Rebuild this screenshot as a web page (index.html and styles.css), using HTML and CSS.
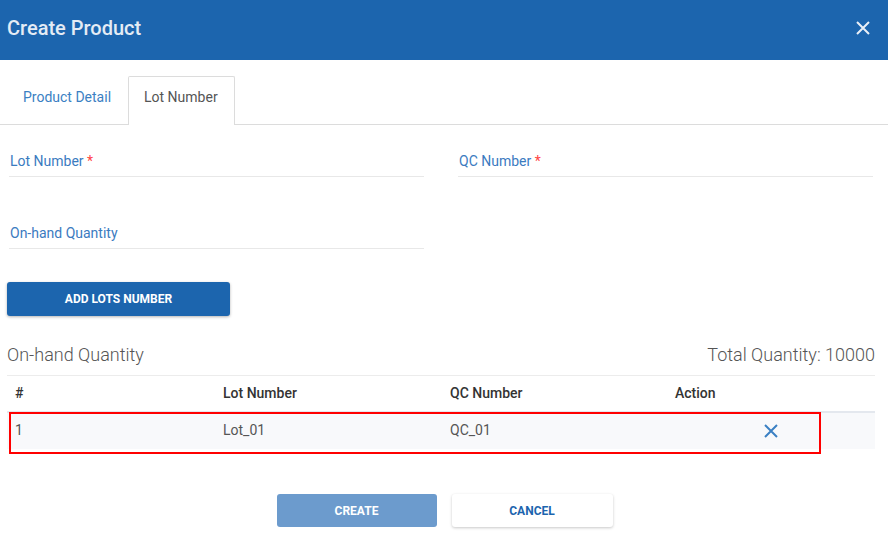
FILE: index.html
```html
<!DOCTYPE html>
<html>
<head>
<meta charset="utf-8">
<link rel="stylesheet" href="styles.css">
</head>
<body>
<div class="dialog">
  <header class="dlg-header">
    <h1 class="dlg-title">Create Product</h1>
    <button class="dlg-close" aria-label="Close">
      <svg width="14" height="14" viewBox="0 0 14 14"><path d="M1 1L13 13M13 1L1 13" stroke="#e9eff7" stroke-width="2" fill="none"/></svg>
    </button>
  </header>

  <nav class="tabs">
    <div class="tab">Product Detail</div>
    <div class="tab tab-active">Lot Number</div>
  </nav>

  <main class="content">
    <div class="form-grid">
      <div class="field"><span class="label">Lot Number</span> <span class="req">*</span></div>
      <div class="field"><span class="label">QC Number</span> <span class="req">*</span></div>
      <div class="field"><span class="label">On-hand Quantity</span></div>
    </div>

    <button class="btn btn-primary btn-add">ADD LOTS NUMBER</button>

    <div class="section-head">
      <span>On-hand Quantity</span>
      <span>Total Quantity: 10000</span>
    </div>

    <div class="table-wrap">
      <table class="lots">
        <colgroup>
          <col class="c1"><col class="c2"><col class="c3"><col class="c4">
        </colgroup>
        <thead>
          <tr><th>#</th><th>Lot Number</th><th>QC Number</th><th>Action</th></tr>
        </thead>
        <tbody>
          <tr>
            <td>1</td><td>Lot_01</td><td>QC_01</td>
            <td class="act"><svg class="x-icon" width="14" height="14" viewBox="0 0 14 14"><path d="M1 1L13 13M13 1L1 13" stroke="#3b80c3" stroke-width="2" fill="none"/></svg></td>
          </tr>
        </tbody>
      </table>
      <div class="highlight"></div>
    </div>

    <div class="actions">
      <button class="btn btn-create">CREATE</button>
      <button class="btn btn-cancel">CANCEL</button>
    </div>
  </main>
</div>
</body>
</html>
```

FILE: styles.css
```css
* { box-sizing: border-box; }
html, body { margin: 0; padding: 0; background: #fff; }
body {
  font-family: Roboto, "Liberation Sans", Arial, sans-serif;
  font-size: 14px;
  color: #555;
  width: 888px;
  height: 534px;
  overflow: hidden;
}

.dlg-header {
  height: 60px;
  background: #1c65ae;
  display: flex;
  align-items: center;
  justify-content: space-between;
  padding: 0 18px 4px 7px;
}
.dlg-title {
  margin: 0;
  font-size: 20px;
  font-weight: 500;
  color: #e4ecf5;
  line-height: 24px;
}
.dlg-close {
  background: none;
  border: 0;
  padding: 0;
  width: 14px;
  height: 14px;
  display: flex;
}

.tabs {
  display: flex;
  padding: 16px 0 0 7px;
  border-bottom: 1px solid #dcdcdc;
}
.tab {
  height: 48px;
  line-height: 20px;
  padding: 10px 16px 0 15px;
  color: #3b7fc3;
  border: 1px solid transparent;
  border-bottom: 0;
  margin-bottom: -1px;
}
.tab-active {
  color: #555;
  background: #fff;
  border-color: #dcdcdc;
  height: 49px;
  border-radius: 2px 2px 0 0;
}

.content { padding: 0 13px 0 7px; }

.form-grid {
  display: grid;
  grid-template-columns: 415px 415px;
  column-gap: 34px;
  row-gap: 46px;
  padding: 26px 2px 0 2px;
}
.field {
  line-height: 20px;
  padding: 0 1px 5px;
  border-bottom: 1px solid #e8e8e8;
}
.label { color: #3b7bbf; }
.req { color: #f44; }

.btn {
  font-family: Roboto, "Liberation Sans", Arial, sans-serif;
  font-size: 12px;
  font-weight: 700;
  border: 0;
  border-radius: 3px;
  cursor: pointer;
}
.btn-add {
  display: block;
  margin-top: 33px;
  width: 223px;
  height: 34px;
  background: #1c65ae;
  color: #fff;
  box-shadow: 0 1px 3px rgba(0,0,0,0.3);
}

.section-head {
  display: flex;
  justify-content: space-between;
  margin-top: 29px;
  font-size: 18px;
  line-height: 20px;
  font-weight: 300;
  color: #555;
  padding-bottom: 10px;
  border-bottom: 1px solid #ececec;
}

.table-wrap { position: relative; }
.lots {
  width: 100%;
  border-collapse: collapse;
  table-layout: fixed;
}
.c1 { width: 208px; }
.c2 { width: 227px; }
.c3 { width: 225px; }
.c4 { width: 208px; }
.lots th {
  height: 36px;
  text-align: left;
  font-weight: 500;
  color: #333;
  padding: 0 8px 2px;
  border-bottom: 2px solid #e4e8ee;
}
.lots td {
  height: 37px;
  padding: 0 8px 2px;
  background: #f8f9fb;
  color: #555;
  vertical-align: middle;
}
.lots td.act { text-align: center; padding: 0; }
.x-icon { display: block; margin: 0 auto; }

.highlight {
  position: absolute;
  left: 2px;
  top: 36px;
  width: 812px;
  height: 42px;
  border: 2px solid #f00;
  pointer-events: none;
}

.actions {
  display: flex;
  justify-content: center;
  gap: 15px;
  margin-top: 45px;
  padding-left: 7px;
}
.btn-create {
  width: 160px;
  height: 33px;
  background: #6c9bcd;
  color: #fff;
}
.btn-cancel {
  width: 161px;
  height: 33px;
  background: #fff;
  color: #1c65ae;
  box-shadow: 0 1px 3px rgba(0,0,0,0.22);
}
```
